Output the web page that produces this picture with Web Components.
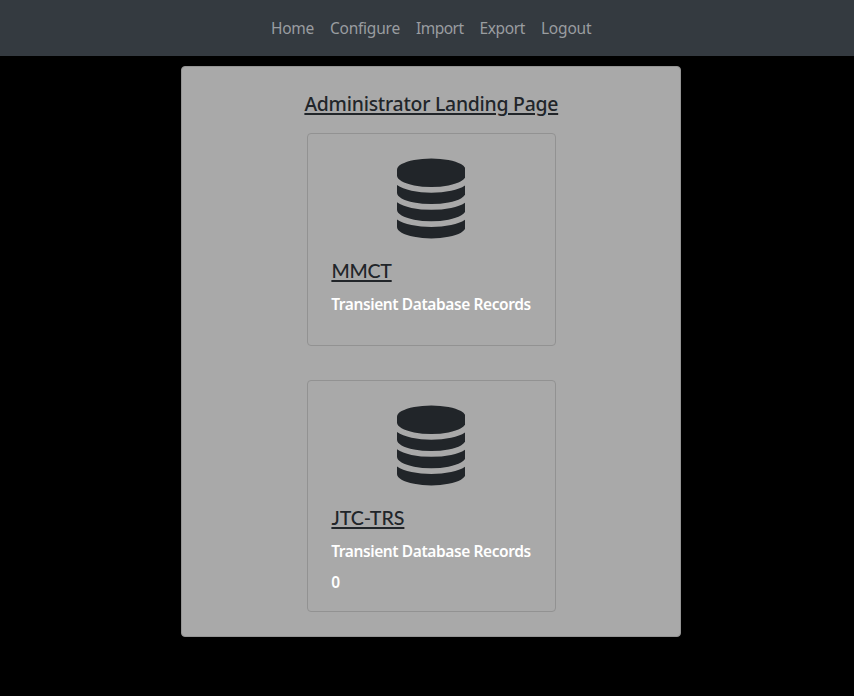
<!DOCTYPE html>
<html lang="en">
<head>
<meta charset="utf-8">
<title>Administrator Landing Page</title>
<style>
html,body{margin:0;height:100%;background:#000}
body{font-family:"Segoe UI","Noto Sans","Open Sans",sans-serif;color:#212529;overflow:hidden}
</style>
</head>
<body>
<admin-page></admin-page>
<script>
// Text line whose tracking is adjusted to a given advance width.
customElements.define('fit-text', class extends HTMLElement {
  connectedCallback() {
    if (this.shadowRoot) return;
    this.attachShadow({mode:'open'}).innerHTML =
      '<style>:host{display:block;white-space:nowrap}</style><span><slot></slot></span>';
    const s = this.shadowRoot.querySelector('span');
    const w = parseFloat(this.getAttribute('w'));
    const gap = (w - s.getBoundingClientRect().width) / this.textContent.length;
    s.style.letterSpacing = gap + 'px';
    this.style.width = w + 'px';
  }
});
customElements.define('nav-bar', class extends HTMLElement {
  connectedCallback() {
    this.attachShadow({mode:'open'}).innerHTML = `
<style>:host{display:block;background:#343a40}
nav{display:flex;justify-content:center;gap:16px;height:56px;align-items:center;width:862.5px}
fit-text{font-size:15.5px;line-height:24px;color:#9a9da0}</style>
<nav><fit-text w="42.8">Home</fit-text><fit-text w="70">Configure</fit-text><fit-text w="47.7">Import</fit-text><fit-text w="45.3">Export</fit-text><fit-text w="50.5">Logout</fit-text></nav>`;
  }
});
customElements.define('db-icon', class extends HTMLElement {
  connectedCallback() {
    this.attachShadow({mode:'open'}).innerHTML = `
<style>:host{display:block;width:68.57px;height:80px}svg{display:block}</style>
<svg width="68.57" height="81" viewBox="0 -9 1536 1814.4" fill="#212529"><path d="M768 768q237 0 443-43t325-127v170q0 69-103 128t-280 93.5-385 34.5-385-34.5-280-93.5-103-128v-170q119 84 325 127t443 43zm0 768q237 0 443-43t325-127v170q0 69-103 128t-280 93.5-385 34.5-385-34.5-280-93.5-103-128v-170q119 84 325 127t443 43zm0-384q237 0 443-43t325-127v170q0 69-103 128t-280 93.5-385 34.5-385-34.5-280-93.5-103-128v-170q119 84 325 127t443 43zm0-1152q208 0 385 34.5t280 93.5 103 128v128q0 69-103 128t-280 93.5-385 34.5-385-34.5-280-93.5-103-128v-128q0-69 103-128t280-93.5 385-34.5z"/></svg>`;
  }
});
customElements.define('db-card', class extends HTMLElement {
  connectedCallback() {
    const count = this.getAttribute('count');
    this.attachShadow({mode:'open'}).innerHTML = `
<style>:host{display:block;box-sizing:border-box;width:249px;border:1px solid #929292;border-radius:4px;padding:24px 23.5px 0}
db-icon{margin:0 auto 21px}
.name{font-family:"Segoe UI",Lato,sans-serif;font-size:19.6px;line-height:24px;font-weight:500;text-decoration:underline;text-decoration-thickness:2px;text-underline-offset:2px;margin:0 0 9px .4px}
.line{font-size:15.5px;line-height:24px;font-weight:600;color:#fff;margin:0 0 7px .2px}</style>
<db-icon></db-icon>
<fit-text class="name" w="${this.getAttribute('w')}">${this.getAttribute('name')}</fit-text>
<fit-text class="line" w="199.6">Transient Database Records</fit-text>
${count ? `<fit-text class="line" w="8.9">${count}</fit-text>` : ''}`;
  }
});
customElements.define('admin-page', class extends HTMLElement {
  connectedCallback() {
    this.attachShadow({mode:'open'}).innerHTML = `
<style>:host{display:block}
main{box-sizing:border-box;width:500px;height:571px;margin:10px 0 0 181px;background:#a9a9a9;border:1px solid #949494;border-radius:4px;padding-top:25px;display:flex;flex-direction:column;align-items:center}
.title{font-size:19.4px;line-height:24px;font-weight:500;text-decoration:underline;text-decoration-thickness:2px;text-underline-offset:2px;margin:0 0 17px .6px}
.a{height:213px;margin-bottom:34px}.b{height:232px}</style>
<nav-bar></nav-bar>
<main><fit-text class="title" w="253.8">Administrator Landing Page</fit-text>
<db-card class="a" name="MMCT" w="60.3"></db-card>
<db-card class="b" name="JTC-TRS" w="73" count="0"></db-card></main>`;
  }
});
</script>
</body>
</html>
